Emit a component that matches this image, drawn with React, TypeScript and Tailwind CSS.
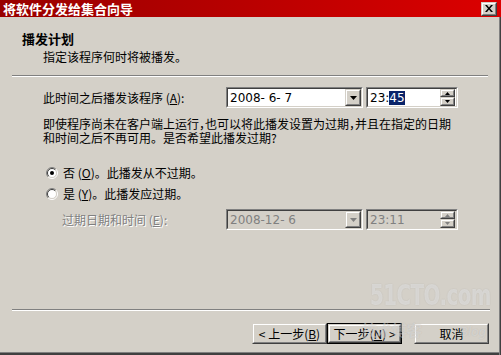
import React from "react";

const cjk = "font-['SimSun','Noto_Sans_CJK_SC',sans-serif]";

function Sunken({ children, className = "" }: { children: React.ReactNode; className?: string }) {
  return (
    <div className={`border border-t-[#808080] border-l-[#808080] border-b-white border-r-white ${className}`}>
      <div className="h-full border border-t-[#404040] border-l-[#404040] border-b-[#d4d0c8] border-r-[#d4d0c8] flex items-center">
        {children}
      </div>
    </div>
  );
}

function Raised({ children, className = "" }: { children?: React.ReactNode; className?: string }) {
  return (
    <div className={`border border-t-[#d4d0c8] border-l-[#d4d0c8] border-b-[#404040] border-r-[#404040] bg-[#d4d0c8] ${className}`}>
      <div className="h-full border border-t-white border-l-white border-b-[#808080] border-r-[#808080] flex items-center justify-center">
        {children}
      </div>
    </div>
  );
}

function DateBox({ value, disabled }: { value: string; disabled?: boolean }) {
  return (
    <Sunken className={`w-[137px] h-[21px] ${disabled ? "bg-[#d4d0c8]" : "bg-white"}`}>
      <span
        className={`flex-1 pl-[2px] text-[12px] font-['DejaVu_Sans',sans-serif] whitespace-pre ${
          disabled ? "text-[#808080]" : "text-black"
        }`}
      >
        {value}
      </span>
      <Raised className="w-[16px] h-[17px]">
        <svg width="7" height="4" viewBox="0 0 7 4">
          <path d="M0 0h7L3.5 4z" fill={disabled ? "#808080" : "#000"} />
        </svg>
      </Raised>
    </Sunken>
  );
}

function TimeBox({ hh, mm, disabled }: { hh: string; mm: string; disabled?: boolean }) {
  const c = disabled ? "#808080" : "#000";
  return (
    <Sunken className={`w-[92px] h-[21px] ${disabled ? "bg-[#d4d0c8]" : "bg-white"}`}>
      <span
        className={`flex-1 pl-[2px] text-[12px] font-['DejaVu_Sans',sans-serif] whitespace-pre ${
          disabled ? "text-[#808080]" : "text-black"
        }`}
      >
        {hh}:
        {disabled ? mm : <span className="bg-[#0a246a] text-white">{mm}</span>}
      </span>
      <div className="flex flex-col mr-[1px]">
        <Raised className="w-[15px] h-[8px]">
          <svg width="5" height="3" viewBox="0 0 5 3">
            <path d="M2.5 0L5 3H0z" fill={c} />
          </svg>
        </Raised>
        <Raised className="w-[15px] h-[9px]">
          <svg width="5" height="3" viewBox="0 0 5 3">
            <path d="M0 0h5L2.5 3z" fill={c} />
          </svg>
        </Raised>
      </div>
    </Sunken>
  );
}

function Radio({ checked }: { checked?: boolean }) {
  return (
    <svg width="12" height="12" viewBox="0 0 12 12">
      <circle cx="6" cy="6" r="4.5" fill="#fff" />
      <path d="M2.1 9.9A5.5 5.5 0 0 1 9.9 2.1" fill="none" stroke="#808080" />
      <path d="M9.9 2.1A5.5 5.5 0 0 1 2.1 9.9" fill="none" stroke="#fff" />
      <path d="M2.8 9.2A4.5 4.5 0 0 1 9.2 2.8" fill="none" stroke="#404040" />
      <path d="M9.2 2.8A4.5 4.5 0 0 1 2.8 9.2" fill="none" stroke="#d4d0c8" />
      {checked && <circle cx="6" cy="6" r="2" fill="#000" />}
    </svg>
  );
}

function Divider({ className = "" }: { className?: string }) {
  return <div className={`h-[2px] border-t border-t-[#808080] border-b border-b-white ${className}`} />;
}

function Button({ children, focused }: { children: React.ReactNode; focused?: boolean }) {
  return (
    <div className={`${focused ? "border border-black" : ""} w-[75px] h-[21px]`}>
      <Raised className="w-full h-full">
        <span className={`text-[12px] text-black whitespace-pre ${cjk}`}>{children}</span>
      </Raised>
    </div>
  );
}

export default function App() {
  return (
    <div className={`relative w-[501px] h-[355px] bg-[#d4d0c8] overflow-hidden flex flex-col ${cjk}`}>
      {/* title bar */}
      <div className="h-[17px] flex items-center justify-between bg-gradient-to-r from-[#980000] to-[#dc0000]">
        <span className="pl-[3px] text-[13px] font-bold text-white leading-[17px]">将软件分发给集合向导</span>
        <Raised className="w-[16px] h-[14px] mr-[4px]">
          <svg width="8" height="7" viewBox="0 0 8 7">
            <path d="M0 0h2l2 2.5L6 0h2L5 3.5 8 7H6L4 4.5 2 7H0l3-3.5z" fill="#000" />
          </svg>
        </Raised>
      </div>

      {/* header */}
      <div className="h-[58px] pl-[22px] pt-[15px]">
        <div className="text-[13px] font-bold leading-[14px] text-black">播发计划</div>
        <div className="mt-[4px] pl-[21px] text-[12px] leading-[14px] text-black">指定该程序何时将被播发。</div>
      </div>
      <Divider className="ml-[12px] w-[476px]" />

      {/* body */}
      <div className="h-[232px] pl-[43px] text-[12px] text-black">
        <div className="mt-[10px] flex items-center">
          <span className="w-[183px] leading-[14px]">
            此时间之后播发该程序 (<u>A</u>):
          </span>
          <DateBox value="2008- 6- 7" />
          <div className="w-[3px]" />
          <TimeBox hh="23" mm="45" />
        </div>

        <div className="mt-[9px] leading-[14px] whitespace-nowrap">
          <div>
            即使程序尚未在客户端上运行<span className="[font-feature-settings:'halt']">，</span>也可以将此播发设置为过期<span className="[font-feature-settings:'halt']">，</span>并且在指定的日期
          </div>
          <div>和时间之后不再可用。是否希望此播发过期?</div>
        </div>

        <div className="mt-[21px] flex items-center gap-[5px] pl-[3px] leading-[14px]">
          <Radio checked />
          <span>
            否 (<u>O</u>)。此播发从不过期。
          </span>
        </div>
        <div className="mt-[7px] flex items-center gap-[5px] pl-[3px] leading-[14px]">
          <Radio />
          <span>
            是 (<u>Y</u>)。此播发应过期。
          </span>
        </div>

        <div className="mt-[8px] flex items-center">
          <span className="w-[183px] pl-[19px] leading-[14px] text-[#808080] [text-shadow:1px_1px_0_#fff]">
            过期日期和时间 (<u>E</u>):
          </span>
          <DateBox value="2008-12- 6" disabled />
          <div className="w-[3px]" />
          <TimeBox hh="23" mm="11" disabled />
        </div>
      </div>

      <Divider className="ml-[12px] w-[478px]" />

      {/* buttons */}
      <div className="mt-[12px] flex justify-end pr-[12px]">
        <Button>&lt; 上一步(<u>B</u>)</Button>
        <Button focused>
          下一步(<u>N</u>) &gt;
        </Button>
        <div className="w-[12px]" />
        <Button>取消</Button>
      </div>

      <div className="absolute left-0 right-0 bottom-0 h-[3px] border-t border-t-[#808080] bg-[#404040]" />
      <div className="absolute top-[17px] bottom-0 right-0 w-[2px] border-l border-l-[#808080] bg-[#404040]" />

      {/* watermark */}
      <div className="absolute left-[370px] top-[283px] pointer-events-none whitespace-nowrap origin-top-left scale-y-[1.3] text-[22px] font-bold leading-[20px] tracking-[-0.5px] font-['DejaVu_Sans_Condensed',sans-serif] text-white/45 [text-shadow:0_0_1px_rgba(120,120,120,0.35)]">
        51CTO.com
      </div>
      <div className="absolute left-[362px] top-[320px] pointer-events-none whitespace-nowrap flex items-end text-white/35 [text-shadow:0_0_1px_rgba(120,120,120,0.3)]">
        <span className="text-[15px] font-bold leading-[20px]">技术博客</span>
        <span className="ml-[38px] text-[12px] italic leading-[16px] font-['DejaVu_Sans',sans-serif]">Blog</span>
      </div>
    </div>
  );
}
